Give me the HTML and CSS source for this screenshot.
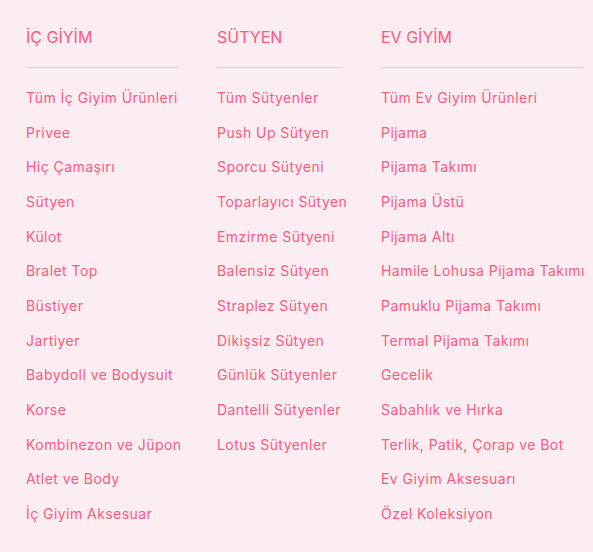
FILE: index.html
```html
<!DOCTYPE html>
<html lang="tr">
<head>
    <meta charset="UTF-8">
    <meta name="viewport" content="width=device-width, initial-scale=1.0">
    <title>Menü</title>
    <link rel="stylesheet" href="styles.css">
</head>
<body>
    <nav class="menu">
        <div class="column col-ic">
            <h3 class="title">İÇ GİYİM</h3>
            <ul class="links">
                <li><a href="#">Tüm İç Giyim Ürünleri</a></li>
                <li><a href="#">Privee</a></li>
                <li><a href="#">Hiç Çamaşırı</a></li>
                <li><a href="#">Sütyen</a></li>
                <li><a href="#">Külot</a></li>
                <li><a href="#">Bralet Top</a></li>
                <li><a href="#">Büstiyer</a></li>
                <li><a href="#">Jartiyer</a></li>
                <li><a href="#">Babydoll ve Bodysuit</a></li>
                <li><a href="#">Korse</a></li>
                <li><a href="#">Kombinezon ve Jüpon</a></li>
                <li><a href="#">Atlet ve Body</a></li>
                <li><a href="#">İç Giyim Aksesuar</a></li>
            </ul>
        </div>
        <div class="column col-sutyen">
            <h3 class="title">SÜTYEN</h3>
            <ul class="links">
                <li><a href="#">Tüm Sütyenler</a></li>
                <li><a href="#">Push Up Sütyen</a></li>
                <li><a href="#">Sporcu Sütyeni</a></li>
                <li><a href="#">Toparlayıcı Sütyen</a></li>
                <li><a href="#">Emzirme Sütyeni</a></li>
                <li><a href="#">Balensiz Sütyen</a></li>
                <li><a href="#">Straplez Sütyen</a></li>
                <li><a href="#">Dikişsiz Sütyen</a></li>
                <li><a href="#">Günlük Sütyenler</a></li>
                <li><a href="#">Dantelli Sütyenler</a></li>
                <li><a href="#">Lotus Sütyenler</a></li>
            </ul>
        </div>
        <div class="column col-ev">
            <h3 class="title">EV GİYİM</h3>
            <ul class="links">
                <li><a href="#">Tüm Ev Giyim Ürünleri</a></li>
                <li><a href="#">Pijama</a></li>
                <li><a href="#">Pijama Takımı</a></li>
                <li><a href="#">Pijama Üstü</a></li>
                <li><a href="#">Pijama Altı</a></li>
                <li><a href="#">Hamile Lohusa Pijama Takımı</a></li>
                <li><a href="#">Pamuklu Pijama Takımı</a></li>
                <li><a href="#">Termal Pijama Takımı</a></li>
                <li><a href="#">Gecelik</a></li>
                <li><a href="#">Sabahlık ve Hırka</a></li>
                <li><a href="#">Terlik, Patik, Çorap ve Bot</a></li>
                <li><a href="#">Ev Giyim Aksesuarı</a></li>
                <li><a href="#">Özel Koleksiyon</a></li>
            </ul>
        </div>
    </nav>
</body>
</html>
```

FILE: styles.css
```css
body {
    margin: 0;
    height: 100vh;
    background-color: #fbedf2;
    font-family: Inter, "Open Sans", Arial, sans-serif;
    color: #f65c82;
}

.menu {
    display: flex;
    gap: 37px;
    padding: 0 0 0 25px;
}

.column {
    flex-shrink: 0;
}

.col-ic {
    width: 154px;
}

.col-sutyen {
    width: 127px;
}

.col-ev {
    width: 204px;
}

.title {
    margin: 0;
    padding: 27px 0 20px 1px;
    font-size: 16px;
    font-weight: 400;
    line-height: 20px;
    border-bottom: 1px solid #f9c6d3;
}

.links {
    list-style: none;
    margin: 0;
    padding: 13px 0 0 1px;
}

.links li {
    font-size: 14px;
    line-height: 34.67px;
    letter-spacing: 0.45px;
    white-space: nowrap;
}

.links a {
    color: #f65c82;
    text-decoration: none;
}
```
